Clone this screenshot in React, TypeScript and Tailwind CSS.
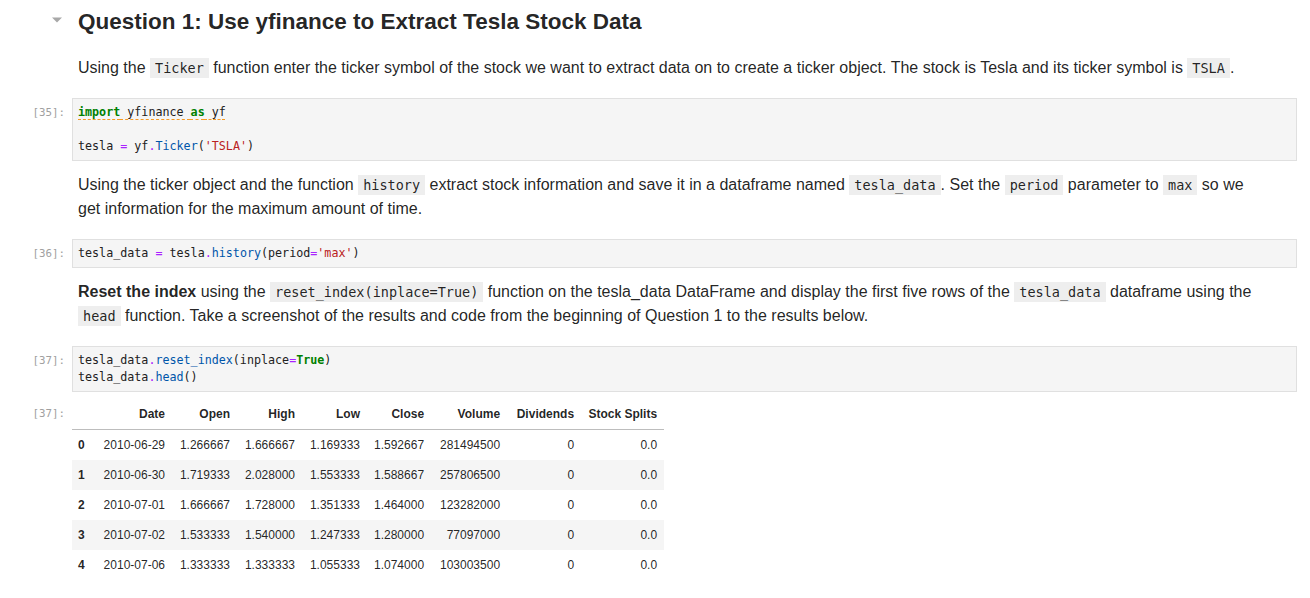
import type { ReactNode } from 'react';

const mono = "font-['DejaVu_Sans_Mono','Liberation_Mono',monospace]";

function Prompt({ n, top = 'pt-[6px]' }: { n: number; top?: string }) {
  return (
    <div className={`w-[72px] flex-shrink-0 text-right pr-[7px] text-[10.8px] leading-[17px] text-[#a0a0a0] ${mono} ${top}`}>
      [{n}]:
    </div>
  );
}

function CodeCell({ n, children }: { n: number; children: ReactNode }) {
  return (
    <div className="flex pr-[13px]">
      <Prompt n={n} />
      <div className={`flex-1 border border-[#e0e0e0] bg-[#f5f5f5] px-[5px] py-[5px] text-[11.7px] leading-[17px] text-[#212121] whitespace-pre ${mono}`}>
        {children}
      </div>
    </div>
  );
}

function Md({ children, className = '' }: { children: ReactNode; className?: string }) {
  return (
    <div className="flex pr-[13px]">
      <div className="w-[72px] flex-shrink-0" />
      <div className={`flex-1 pl-[6px] text-[16px] leading-[24px] ${className}`}>{children}</div>
    </div>
  );
}

function C({ children }: { children: ReactNode }) {
  return <code className={`bg-[#eeeeee] px-[5px] py-[2px] text-[13.5px] leading-[16px] ${mono}`}>{children}</code>;
}

const kw = 'text-[#008000] font-bold';
const op = 'text-[#aa22ff]';
const prop = 'text-[#0055aa]';
const str = 'text-[#ba2121]';

const rows = [
  ['0', '2010-06-29', '1.266667', '1.666667', '1.169333', '1.592667', '281494500', '0', '0.0'],
  ['1', '2010-06-30', '1.719333', '2.028000', '1.553333', '1.588667', '257806500', '0', '0.0'],
  ['2', '2010-07-01', '1.666667', '1.728000', '1.351333', '1.464000', '123282000', '0', '0.0'],
  ['3', '2010-07-02', '1.533333', '1.540000', '1.247333', '1.280000', '77097000', '0', '0.0'],
  ['4', '2010-07-06', '1.333333', '1.333333', '1.055333', '1.074000', '103003500', '0', '0.0'],
];

const headers = ['', 'Date', 'Open', 'High', 'Low', 'Close', 'Volume', 'Dividends', 'Stock Splits'];
const widths = ['w-[20px]', 'w-[80px]', 'w-[65px]', 'w-[65px]', 'w-[65px]', 'w-[64px]', 'w-[76px]', 'w-[74px]', 'w-[83px]'];

export default function App() {
  return (
    <div className="w-[1310px] h-[598px] overflow-hidden bg-white pt-[6px] font-['Liberation_Sans',Arial,sans-serif] text-[rgba(0,0,0,0.87)]">
      {/* Heading */}
      <div className="flex pr-[13px]">
        <div className="w-[72px] flex-shrink-0 pl-[52px] pt-[11px]">
          <svg width="10" height="6" viewBox="0 0 10 6">
            <path d="M0 0.5 L10 0.5 L5 5.5 Z" fill="#a8a8a8" />
          </svg>
        </div>
        <div className="flex-1 pl-[6px]">
          <h1 className="text-[22.5px] leading-[32px] font-bold">Question 1: Use yfinance to Extract Tesla Stock Data</h1>
          <p className="mt-[18px] text-[16px] leading-[24px]">
            Using the <C>Ticker</C> function enter the ticker symbol of the stock we want to extract data on to create a
            ticker object. The stock is Tesla and its ticker symbol is <C>TSLA</C>.
          </p>
        </div>
      </div>

      <div className="mt-[18px]">
        <CodeCell n={35}>
          <span className="underline decoration-dashed decoration-[#f59a23] underline-offset-[3px]">
            <span className={kw}>import</span> yfinance <span className={kw}>as</span> yf
          </span>
          {'\n\n'}tesla <span className={op}>=</span> yf<span className={op}>.</span>
          <span className={prop}>Ticker</span>(<span className={str}>'TSLA'</span>)
        </CodeCell>
      </div>

      <Md className="mt-[12px] mb-[18px]">
        Using the ticker object and the function <C>history</C> extract stock information and save it in a dataframe
        named <C>tesla_data</C>. Set the <C>period</C> parameter to <C>max</C> so we
        <br />
        get information for the maximum amount of time.
      </Md>

      <CodeCell n={36}>
        tesla_data <span className={op}>=</span> tesla<span className={op}>.</span>
        <span className={prop}>history</span>(period<span className={op}>=</span>
        <span className={str}>'max'</span>)
      </CodeCell>

      <Md className="mt-[12px] mb-[18px]">
        <b>Reset the index</b> using the <C>reset_index(inplace=True)</C> function on the tesla_data DataFrame and
        display the first five rows of the <C>tesla_data</C> dataframe using the
        <br />
        <C>head</C> function. Take a screenshot of the results and code from the beginning of Question 1 to the results
        below.
      </Md>

      <CodeCell n={37}>
        tesla_data<span className={op}>.</span>
        <span className={prop}>reset_index</span>(inplace<span className={op}>=</span>
        <span className={kw}>True</span>)
        {'\n'}tesla_data<span className={op}>.</span>
        <span className={prop}>head</span>()
      </CodeCell>

      {/* Output */}
      <div className="flex mt-[7px]">
        <Prompt n={37} />
        <table className="border-collapse text-[12px] leading-[18px] text-[rgba(0,0,0,0.87)]">
          <thead>
            <tr className="border-b border-[#bdbdbd]">
              {headers.map((h, i) => (
                <th key={i} className={`${widths[i]} px-[7px] py-[6px] text-right font-bold whitespace-nowrap`}>
                  {h}
                </th>
              ))}
            </tr>
          </thead>
          <tbody>
            {rows.map((r, i) => (
              <tr key={i} className={i % 2 === 1 ? 'bg-[#f5f5f5]' : ''}>
                {r.map((v, j) =>
                  j === 0 ? (
                    <th key={j} className="pl-[6px] pr-[7px] py-[6px] text-left font-bold">
                      {v}
                    </th>
                  ) : (
                    <td key={j} className="px-[7px] py-[6px] text-right whitespace-nowrap">
                      {v}
                    </td>
                  )
                )}
              </tr>
            ))}
          </tbody>
        </table>
      </div>
    </div>
  );
}
